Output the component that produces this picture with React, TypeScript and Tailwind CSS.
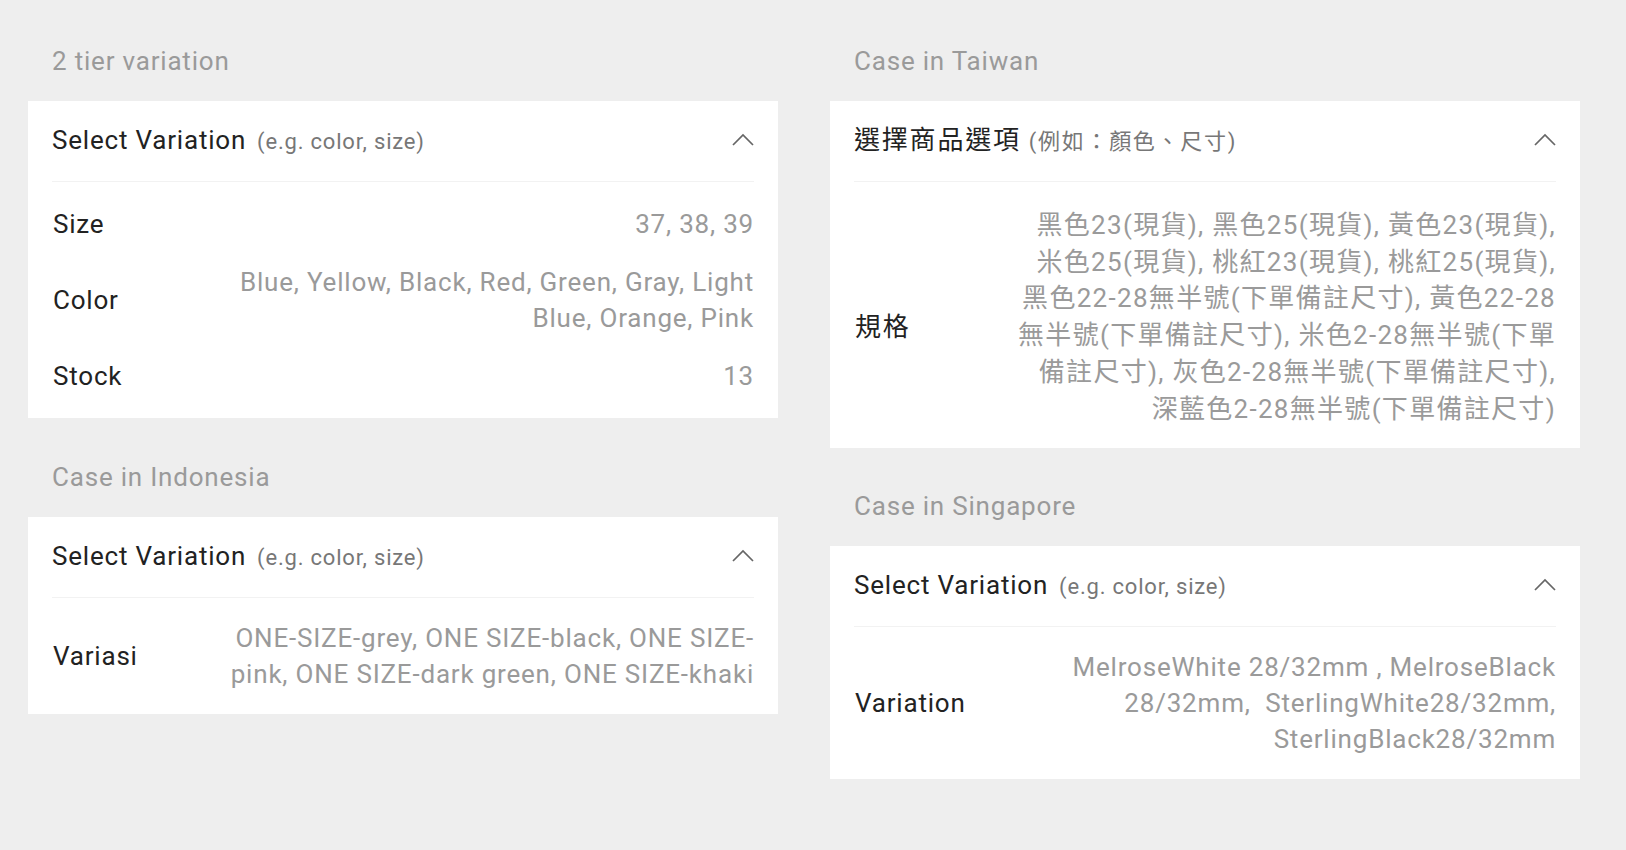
import React from "react";

type Row = { label: string; value: string };

function Chevron() {
  return (
    <svg width="22" height="13" viewBox="0 0 22 13" fill="none" className="mb-[3px] shrink-0">
      <polyline points="1,12 11,2 21,12" stroke="#666666" strokeWidth="1.7" strokeLinejoin="miter" />
    </svg>
  );
}

function Card({
  title,
  header,
  hint,
  rows,
  cjk = false,
}: {
  title: string;
  header: string;
  hint: string;
  rows: Row[];
  cjk?: boolean;
}) {
  return (
    <div className="flex flex-col">
      <div className="pl-6 text-[26px] leading-[36px] tracking-[0.8px] text-[#9a9a9a]">{title}</div>
      <div className="mt-[22px] bg-white px-6">
        <div className="flex h-[81px] items-center justify-between border-b border-[#f2f2f2]">
          <div className="flex items-baseline">
            <span
              className={
                cjk
                  ? "text-[26px] leading-[36px] tracking-[1.8px] text-[#222222]"
                  : "text-[26px] leading-[36px] tracking-[0.8px] text-[#222222]"
              }
            >
              {header}
            </span>
            <span
              className={
                cjk
                  ? "ml-[8px] text-[22px] leading-[36px] tracking-[1.7px] text-[#777777]"
                  : "ml-[11px] text-[22px] leading-[36px] tracking-[0.8px] text-[#777777]"
              }
            >
              {hint}
            </span>
          </div>
          <Chevron />
        </div>
        <div className={cjk ? "flex flex-col gap-[20px] pb-[21px] pt-[25px]" : "flex flex-col gap-[20px] pb-[22px] pt-[22px]"}>
          {rows.map((r) => (
            <div key={r.label} className="flex min-h-[40px] items-center justify-between text-[26px]">
              <div
                className={
                  cjk
                    ? "w-[154px] shrink-0 pl-[1px] pt-[20px] leading-[36px] tracking-[1.8px] text-[#222222]"
                    : "w-[154px] shrink-0 pl-[1px] leading-[36px] tracking-[0.8px] text-[#222222]"
                }
              >
                {r.label}
              </div>
              <div
                className={
                  cjk
                    ? "flex-1 text-right leading-[36.7px] tracking-[1.3px] text-[#9a9a9a]"
                    : "flex-1 text-right leading-[36px] tracking-[0.8px] text-[#9a9a9a]"
                }
              >
                {r.value}
              </div>
            </div>
          ))}
        </div>
      </div>
    </div>
  );
}

export default function App() {
  return (
    <div className="min-h-screen w-full bg-[#eeeeee] font-[Roboto,'Noto_Sans_CJK_TC',sans-serif]">
      <div className="flex items-start gap-[52px] pl-[28px] pt-[43px]">
        <div className="flex w-[750px] flex-col gap-[41px]">
          <Card
            title="2 tier variation"
            header="Select Variation"
            hint="(e.g. color, size)"
            rows={[
              { label: "Size", value: "37, 38, 39" },
              { label: "Color", value: "Blue, Yellow, Black, Red, Green, Gray, Light Blue, Orange, Pink" },
              { label: "Stock", value: "13" },
            ]}
          />
          <Card
            title="Case in Indonesia"
            header="Select Variation"
            hint="(e.g. color, size)"
            rows={[
              {
                label: "Variasi",
                value: "ONE-SIZE-grey, ONE SIZE-black, ONE SIZE-pink, ONE SIZE-dark green, ONE SIZE-khaki",
              },
            ]}
          />
        </div>
        <div className="flex w-[750px] flex-col gap-[40px]">
          <Card
            cjk
            title="Case in Taiwan"
            header="選擇商品選項"
            hint="(例如：顏色、尺寸)"
            rows={[
              {
                label: "規格",
                value:
                  "黑色23(現貨), 黑色25(現貨), 黃色23(現貨), 米色25(現貨), 桃紅23(現貨), 桃紅25(現貨), 黑色22-28無半號(下單備註尺寸), 黃色22-28無半號(下單備註尺寸), 米色2-28無半號(下單備註尺寸), 灰色2-28無半號(下單備註尺寸), 深藍色2-28無半號(下單備註尺寸)",
              },
            ]}
          />
          <Card
            title="Case in Singapore"
            header="Select Variation"
            hint="(e.g. color, size)"
            rows={[
              {
                label: "Variation",
                value: "MelroseWhite 28/32mm , MelroseBlack 28/32mm,\u00a0 SterlingWhite28/32mm, SterlingBlack28/32mm",
              },
            ]}
          />
        </div>
      </div>
    </div>
  );
}
